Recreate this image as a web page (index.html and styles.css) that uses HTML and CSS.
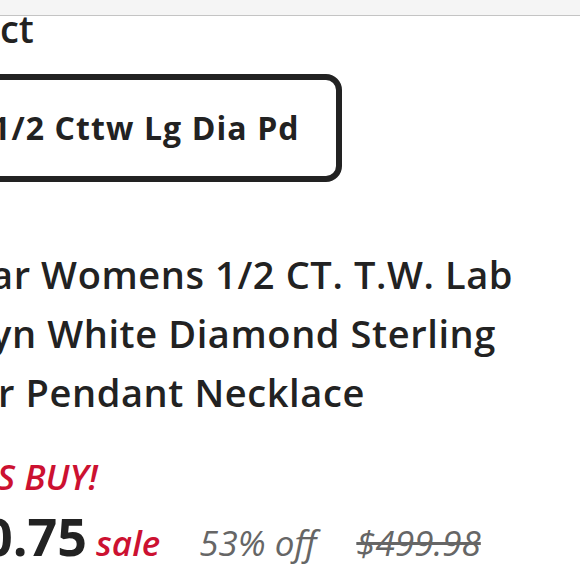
FILE: index.html
```html
<!DOCTYPE html>
<html lang="en">
<head>
<meta charset="utf-8">
<title>Product</title>
<link rel="stylesheet" href="styles.css">
</head>
<body>
<div class="topbar"></div>
<main class="product">
  <div class="label">ct</div>
  <div class="chip">1/2 Cttw Lg Dia Pd</div>
  <h1 class="title">
    <span class="line line-1">ar Womens 1/2 CT. T.W. Lab</span>
    <span class="line line-2">yn White Diamond Sterling</span>
    <span class="line line-3">r Pendant Necklace</span>
  </h1>
  <div class="bonus">S BUY!</div>
  <div class="price-row">
    <span class="price">0.75</span>
    <span class="sale">sale</span>
    <span class="off">53% off</span>
    <span class="orig">$499.98</span>
  </div>
</main>
</body>
</html>
```
FILE: styles.css
```css
html, body {
  margin: 0;
  padding: 0;
  background: #fff;
  overflow: hidden;
}
body {
  font-family: "Open Sans", "Noto Sans", sans-serif;
  color: #222;
  width: 580px;
  height: 580px;
}
.topbar {
  height: 15px;
  background: #f5f5f5;
  border-bottom: 1px solid #c4c4c4;
}
.product {
  display: flex;
  flex-direction: column;
  align-items: flex-start;
}
.label {
  font-size: 38px;
  font-weight: 600;
  line-height: 25px;
}
.chip {
  margin-top: 33px;
  margin-left: -50px;
  border: 6px solid #222;
  border-radius: 16px;
  padding: 28px 36px 28px 36px;
  font-size: 32px;
  font-weight: 700;
  letter-spacing: 1.1px;
  line-height: 40px;
  white-space: nowrap;
}
.title {
  margin: 63px 0 0 0;
  font-size: 38px;
  font-weight: 600;
  letter-spacing: 0.6px;
  line-height: 59px;
}
.line {
  display: block;
  white-space: nowrap;
}
.line-1 { margin-left: -9px; }
.line-2 { margin-left: -9px; }
.line-3 { margin-left: -2px; }
.bonus {
  margin-top: 35px;
  margin-left: -3px;
  font-size: 35px;
  font-style: italic;
  font-weight: 600;
  line-height: 40px;
  color: #cc1131;
}
.price-row {
  margin-top: 9px;
  display: flex;
  align-items: baseline;
  white-space: nowrap;
}
.price {
  margin-left: -17px;
  font-size: 52px;
  font-weight: 700;
  line-height: 60px;
}
.sale {
  margin-left: 9px;
  font-size: 35px;
  font-style: italic;
  font-weight: 600;
  color: #cc1131;
}
.off {
  margin-left: 39px;
  font-size: 35px;
  font-style: italic;
  color: #666;
}
.orig {
  margin-left: 40px;
  font-size: 35px;
  font-style: italic;
  color: #666;
  text-decoration: line-through;
}
```
